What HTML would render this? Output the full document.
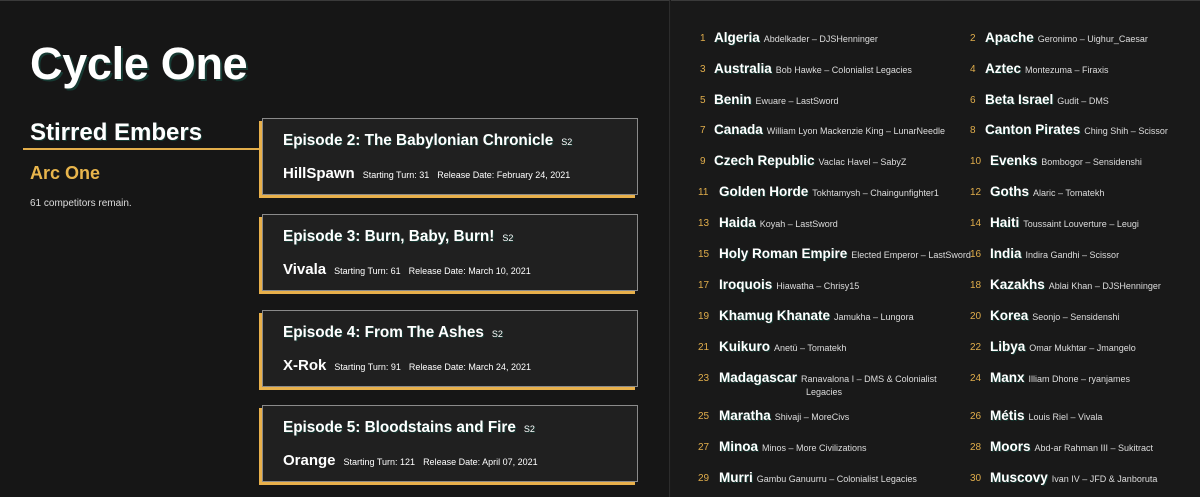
<!DOCTYPE html>
<html><head><meta charset="utf-8"><style>
*{margin:0;padding:0;box-sizing:border-box}
body{width:1200px;height:497px;background:#1a1a1a;font-family:"Liberation Sans",sans-serif;position:relative;overflow:hidden;color:#fff}
.left{position:absolute;left:0;top:0;width:670px;height:497px;background:#161616;border-top:1px solid #3a3a3a;border-right:1px solid #2c2c2c}
.right{position:absolute;left:671px;top:0;width:529px;height:497px;background:#191919;border-top:1px solid #3a3a3a}
h1{position:absolute;left:30px;top:37px;font-size:45px;font-weight:bold;text-shadow:2px 2px 0 #163a33;letter-spacing:-0.3px}
h2{position:absolute;left:30px;top:118px;font-size:24px;font-weight:bold;text-shadow:1px 1px 0 #163a33}
.line{position:absolute;left:23px;top:147px;width:240px;height:2px;background:#e3ae4b}
h3{position:absolute;left:30px;top:162px;font-size:18px;font-weight:bold;color:#e8b54c}
.rem{position:absolute;left:30px;top:197px;font-size:10px;color:#ddd}
.card{position:absolute;left:262px;width:376px;height:77px;background:#202020;border:1px solid #8a8a8a;box-shadow:-3px 3px 0 #e8b04b}
.card .t{position:absolute;left:20px;top:13px;font-size:15.3px;font-weight:bold;text-shadow:1px 1px 0 #163a33}
.card .t small{font-size:9px;font-weight:normal;margin-left:8px}
.card .b{position:absolute;left:20px;top:46px;font-size:15px;font-weight:bold;white-space:nowrap}
.card .b span{font-size:9px;font-weight:normal;margin-left:8px}
.e{position:absolute;white-space:nowrap;font-size:9px;color:#ddd;line-height:13px}
.e .n{position:absolute;color:#e0ad4b;font-size:10px;top:-6px}
.e b{font-size:13.5px;color:#fff;margin-right:4px;text-shadow:1px 1px 0 #163a33}
</style></head><body>
<div class="left">
<h1>Cycle One</h1>
<h2>Stirred Embers</h2>
<div class="line"></div>
<h3>Arc One</h3>
<div class="rem">61 competitors remain.</div>
<div class="card" style="top:117px"><div class="t">Episode 2: The Babylonian Chronicle<small>S2</small></div><div class="b">HillSpawn<span>Starting Turn: 31</span><span>Release Date: February 24, 2021</span></div></div>
<div class="card" style="top:213px"><div class="t">Episode 3: Burn, Baby, Burn!<small>S2</small></div><div class="b">Vivala<span>Starting Turn: 61</span><span>Release Date: March 10, 2021</span></div></div>
<div class="card" style="top:309px"><div class="t">Episode 4: From The Ashes<small>S2</small></div><div class="b">X-Rok<span>Starting Turn: 91</span><span>Release Date: March 24, 2021</span></div></div>
<div class="card" style="top:404px"><div class="t">Episode 5: Bloodstains and Fire<small>S2</small></div><div class="b">Orange<span>Starting Turn: 121</span><span>Release Date: April 07, 2021</span></div></div>
</div>
<div class="right"></div>
<div id="list"></div>
<script>
var L=[["Algeria","Abdelkader – DJSHenninger"],["Apache","Geronimo – Uighur_Caesar"],["Australia","Bob Hawke – Colonialist Legacies"],["Aztec","Montezuma – Firaxis"],["Benin","Ewuare – LastSword"],["Beta Israel","Gudit – DMS"],["Canada","William Lyon Mackenzie King – LunarNeedle"],["Canton Pirates","Ching Shih – Scissor"],["Czech Republic","Vaclac Havel – SabyZ"],["Evenks","Bombogor – Sensidenshi"],["Golden Horde","Tokhtamysh – Chaingunfighter1"],["Goths","Alaric – Tomatekh"],["Haida","Koyah – LastSword"],["Haiti","Toussaint Louverture – Leugi"],["Holy Roman Empire","Elected Emperor – LastSword"],["India","Indira Gandhi – Scissor"],["Iroquois","Hiawatha – Chrisy15"],["Kazakhs","Ablai Khan – DJSHenninger"],["Khamug Khanate","Jamukha – Lungora"],["Korea","Seonjo – Sensidenshi"],["Kuikuro","Anetü – Tomatekh"],["Libya","Omar Mukhtar – Jmangelo"],["Madagascar","Ranavalona I – DMS &amp; Colonialist<br><span style='margin-left:87px'>Legacies</span>"],["Manx","Illiam Dhone – ryanjames"],["Maratha","Shivaji – MoreCivs"],["Métis","Louis Riel – Vivala"],["Minoa","Minos – More Civilizations"],["Moors","Abd-ar Rahman III – Sukitract"],["Murri","Gambu Ganuurru – Colonialist Legacies"],["Muscovy","Ivan IV – JFD &amp; Janboruta"]];
var Y=[38,69,100,130,161,192,223,254,285,316,347,378,416,447,478],h="";
L.forEach(function(e,i){var r=Math.floor(i/2),c=i%2,n=i+1,y=Y[r];
var nx=c?970:(n<10?700:698),tx=c?(n<10?985:990):(n<10?714:719);
h+='<div class="e" style="left:'+tx+'px;top:'+(y-7)+'px"><span class="n" style="left:'+(nx-tx)+'px;top:1px">'+n+'</span><b>'+e[0]+'</b>'+e[1]+'</div>';});
document.getElementById("list").innerHTML=h;
</script>
</body></html>
